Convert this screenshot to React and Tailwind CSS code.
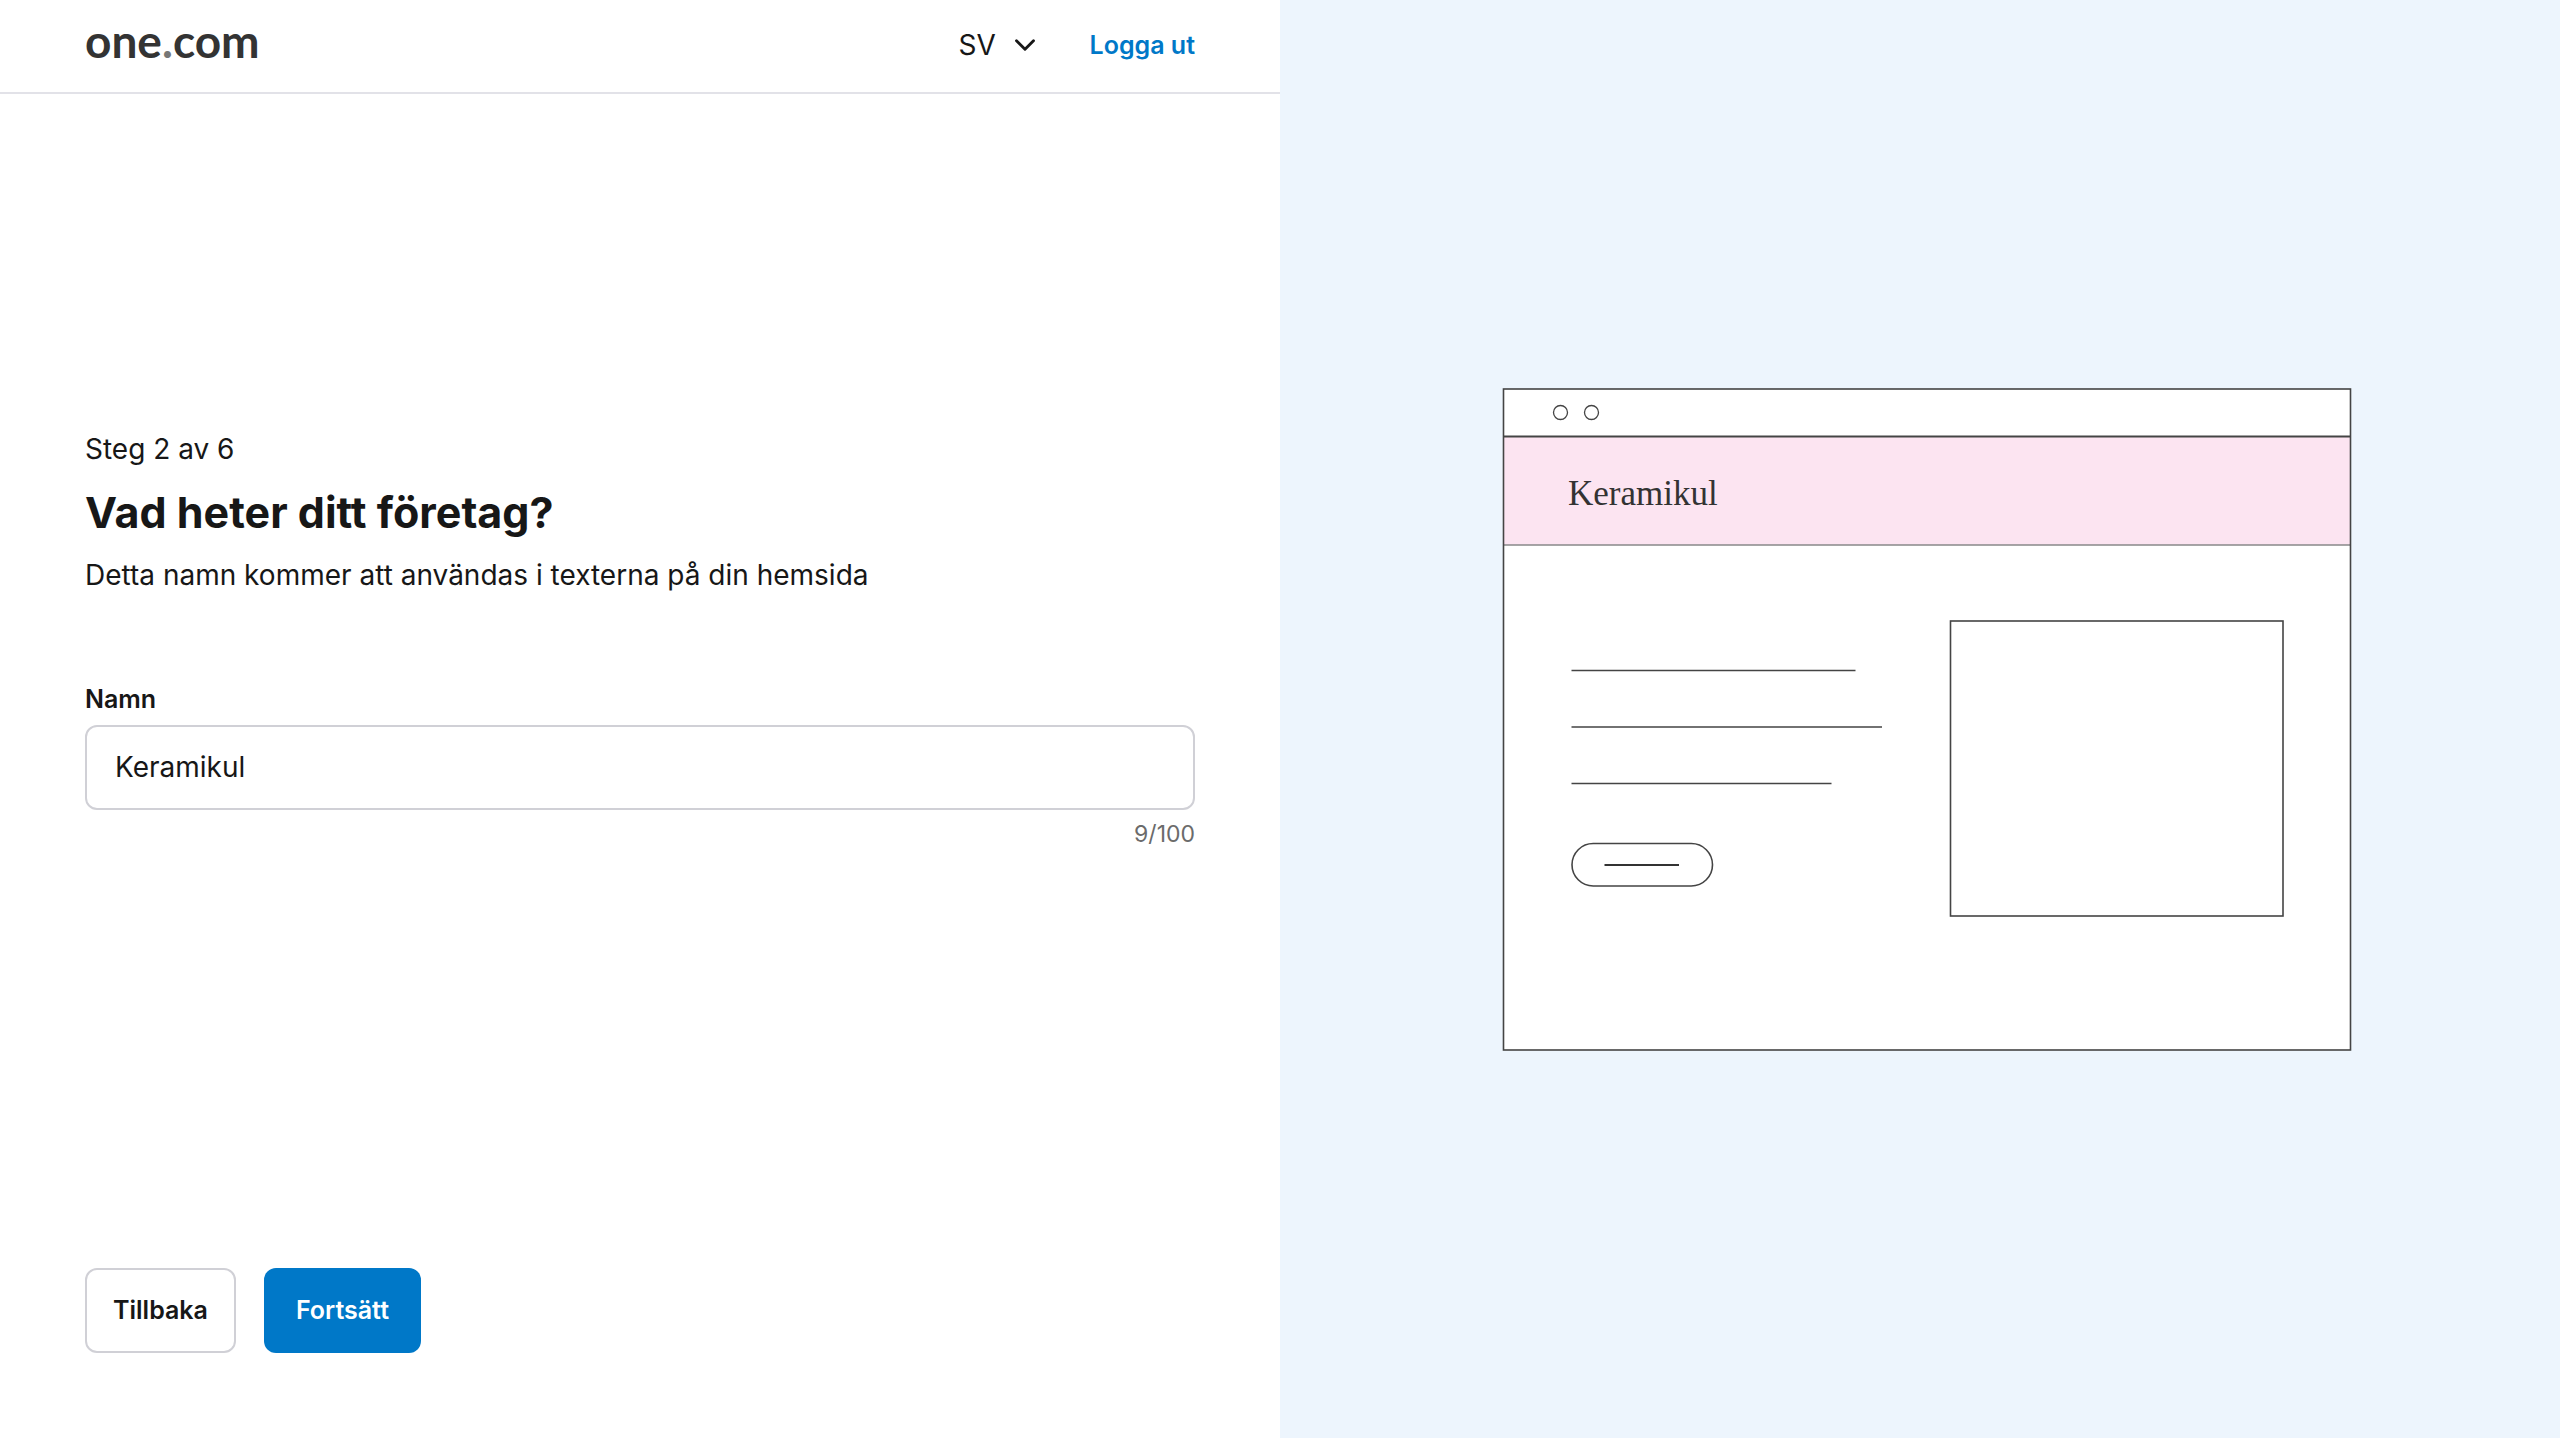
import { useState } from 'react';
import { ChevronDown } from 'lucide-react';

const MAX_LENGTH = 100;

function Header() {
  const [language, setLanguage] = useState('SV');

  return (
    <header className="flex h-[94px] shrink-0 items-center justify-between border-b-2 border-[#e2e2e8] px-[85px] pb-0.5">
      <a href="#" className="pb-2 font-['Lato',sans-serif] text-[46px] leading-[48px] font-bold text-[#333333]">
        one<span className="text-[#777777]">.</span>com
      </a>
      <div className="flex items-center gap-[52px]">
        <div className="relative flex items-center">
          <select
            aria-label="Språk"
            value={language}
            onChange={(e) => setLanguage(e.target.value)}
            className="cursor-pointer appearance-none bg-transparent pr-10 text-[28px] leading-9"
          >
            <option value="SV">SV</option>
            <option value="EN">EN</option>
            <option value="DA">DA</option>
          </select>
          <ChevronDown size={34} strokeWidth={2} className="pointer-events-none absolute -right-1" />
        </div>
        <a href="#" className="text-[25px] leading-9 font-semibold text-[#0078c8]">
          Logga ut
        </a>
      </div>
    </header>
  );
}

function SitePreview({ name }) {
  return (
    <svg viewBox="0 0 850 664" fill="none" stroke="#444444" strokeWidth="1.6" className="ml-3.5 h-auto w-[850px] max-w-[80%]">
      <rect x="1.5" y="2" width="847" height="661.5" fill="#ffffff" stroke="none" />
      <rect x="1.5" y="49.5" width="847" height="108.5" fill="#fce4f1" stroke="none" />
      <path d="M1.5 158H848.5" stroke="#888888" />
      <path d="M1.5 49.5H848.5" strokeWidth="2" />
      <rect x="1.5" y="2" width="847" height="661" />
      <circle cx="58.5" cy="25.5" r="7" strokeWidth="1.3" />
      <circle cx="89.5" cy="25.5" r="7" strokeWidth="1.3" />
      <text x="66" y="118" fill="#333333" stroke="none" className="font-['Liberation_Serif',serif] text-[35px]">
        {name}
      </text>

      {/* Text lines and button */}
      <path d="M69.5 283.5H353.5M69.5 340H380M69.5 396.5H329.5" />
      <rect x="70" y="456.5" width="140.5" height="42.5" rx="21.25" />
      <path d="M102.5 478H177" stroke="#333333" strokeWidth="2" />

      {/* Image placeholder */}
      <rect x="448.5" y="234" width="332.5" height="295" />
    </svg>
  );
}

export default function App() {
  const [name, setName] = useState('Keramikul');

  return (
    <div className="grid min-h-screen grid-cols-2 bg-white font-['Inter',sans-serif] text-[#171717]">
      <div className="flex flex-col">
        <Header />
        <form onSubmit={(e) => e.preventDefault()} className="flex flex-1 flex-col px-[85px] pb-[85px]">
          <div className="flex flex-1 flex-col justify-center pb-[84px]">
            <p className="text-[28px] leading-10">Steg 2 av 6</p>
            <h1 className="mt-4 text-[43px] leading-[54px] font-bold">Vad heter ditt företag?</h1>
            <p className="mt-4 text-[28px] leading-10">Detta namn kommer att användas i texterna på din hemsida</p>

            <label htmlFor="company-name" className="mt-[86px] text-[25px] leading-9 font-semibold">
              Namn
            </label>
            <input
              id="company-name"
              type="text"
              maxLength={MAX_LENGTH}
              value={name}
              onChange={(e) => setName(e.target.value)}
              className="mt-2 h-[85px] w-full rounded-xl border-2 border-[#d0d0d6] px-7 text-[28px] focus:border-[#0078c8] focus:outline-none"
            />
            <p className="mt-2 text-right text-[23px] leading-8 text-[#6b6b6b]">
              {name.length}/{MAX_LENGTH}
            </p>
          </div>

          <div className="flex gap-7">
            <button type="button" className="h-[85px] rounded-xl border-2 border-[#d0d0d6] px-[26px] text-[25px] font-semibold">
              Tillbaka
            </button>
            <button type="submit" className="h-[85px] rounded-xl bg-[#0078c8] px-8 text-[25px] font-semibold text-white">
              Fortsätt
            </button>
          </div>
        </form>
      </div>

      <div className="flex items-center justify-center bg-[#edf5fd]">
        <SitePreview name={name} />
      </div>
    </div>
  );
}
